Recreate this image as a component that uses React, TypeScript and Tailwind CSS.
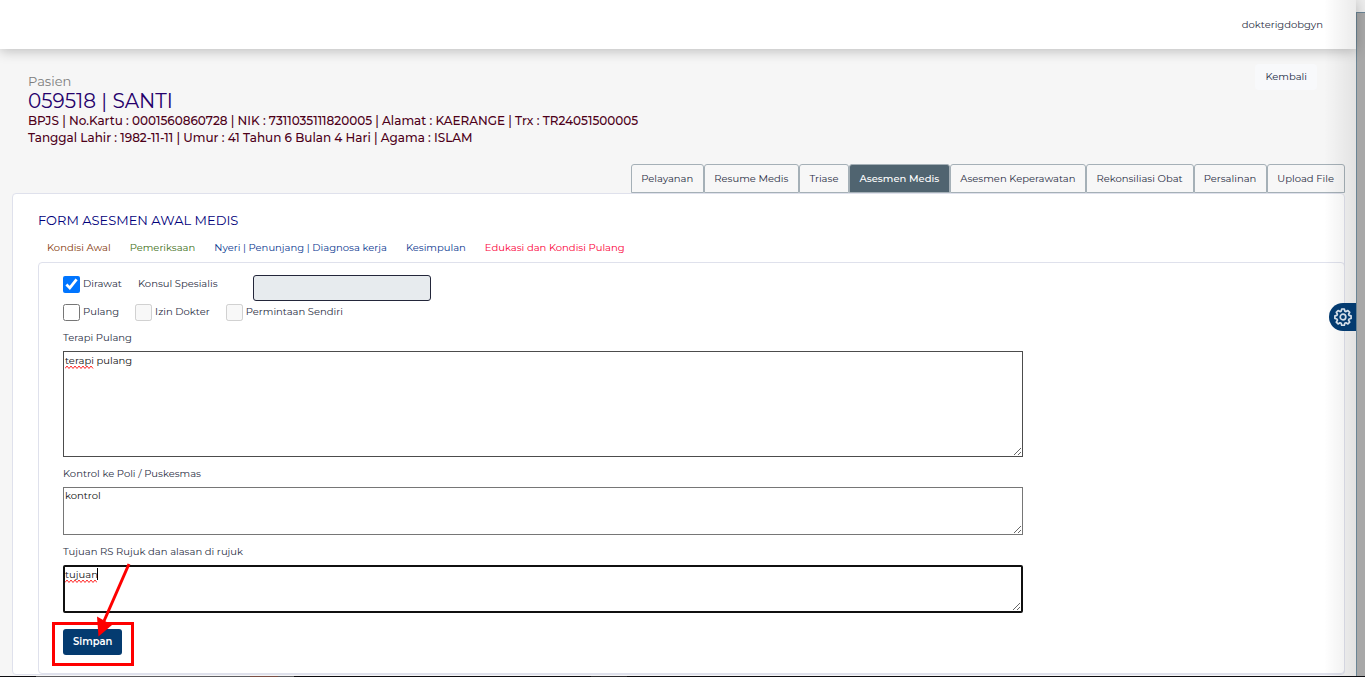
import React from "react";

const tabs = [
  "Pelayanan",
  "Resume Medis",
  "Triase",
  "Asesmen Medis",
  "Asesmen Keperawatan",
  "Rekonsiliasi Obat",
  "Persalinan",
  "Upload File",
];

const sections = [
  { label: "Kondisi Awal", color: "text-[#853a0c]" },
  { label: "Pemeriksaan", color: "text-[#3f7018]" },
  { label: "Nyeri | Penunjang | Diagnosa kerja", color: "text-[#0a3890]" },
  { label: "Kesimpulan", color: "text-[#0a3890]" },
  { label: "Edukasi dan Kondisi Pulang", color: "text-[#fb0038]" },
];

function Squiggle({ width }: { width: number }) {
  let d = "M0 3.5";
  for (let x = 2, up = true; x <= width; x += 2, up = !up) {
    d += ` L${x} ${up ? 1 : 3.5}`;
  }
  return (
    <svg
      className="pointer-events-none absolute top-[14px] left-[2px]"
      width={width}
      height={5}
      fill="none"
      stroke="#ff2a2a"
      aria-hidden="true"
    >
      <path d={d} />
    </svg>
  );
}

function Check({
  id,
  label,
  checked,
  disabled,
}: {
  id: string;
  label: string;
  checked?: boolean;
  disabled?: boolean;
}) {
  return (
    <span className="flex items-center gap-[3px]">
      <input
        id={id}
        type="checkbox"
        defaultChecked={checked}
        disabled={disabled}
        className="size-[17px] accent-[#0075ff]"
      />
      <label htmlFor={id} className="pb-[2px]">
        {label}
      </label>
    </span>
  );
}

function Area({
  id,
  label,
  value,
  mark,
  box,
  caret,
}: {
  id: string;
  label: string;
  value: string;
  mark?: number;
  box: string;
  caret?: boolean;
}) {
  return (
    <div>
      <label htmlFor={id} className="block leading-4">
        {label}
      </label>
      <div className="relative mt-[5px] w-[960px] max-w-full">
        <textarea
          id={id}
          defaultValue={value}
          spellCheck={false}
          className={`block w-full resize bg-white leading-4 text-[#111] outline-none ${box}`}
        />
        {mark && <Squiggle width={mark} />}
        {caret && <span className="absolute top-[3px] left-[34px] h-3 w-px bg-black" />}
      </div>
    </div>
  );
}

export default function App() {
  return (
    <div className="relative flex min-h-screen bg-[#f6f6f6] font-['Montserrat','Inter',sans-serif] text-[10px] text-[#2b2f45]">
      <div className="relative flex min-w-0 flex-1 flex-col">
        <header className="flex h-[49px] items-center justify-end bg-white pr-[33px] shadow-[0_2px_12px_rgba(0,0,0,0.24)]">
          <span>dokterigdobgyn</span>
        </header>

        <main className="flex flex-1 flex-col pr-[11px] pl-3">
          <div className="flex items-start justify-between pr-7 pl-4">
            <div className="pt-6">
              <p className="text-[13px] leading-[17px] text-[#7d7d7d]">Pasien</p>
              <h1 className="text-[20px] leading-[22px] text-[#25006b]">059518 | SANTI</h1>
              <div className="text-[12px] leading-[17px] font-medium text-[#4d0019]">
                <p>
                  BPJS | No.Kartu : 0001560860728 | NIK : 7311035111820005 | Alamat : KAERANGE | Trx
                  : TR24051500005
                </p>
                <p>
                  Tanggal Lahir : 1982-11-11 | Umur : 41 Tahun 6 Bulan 4 Hari | Agama : ISLAM
                </p>
              </div>
            </div>
            <button
              type="button"
              className="mt-[15px] h-[26px] rounded-sm bg-[#f8f9fb] px-[10px] pb-[2px] text-[#212b45]"
            >
              Kembali
            </button>
          </div>

          <nav className="mt-[18px] flex justify-end">
            {tabs.map((t) => (
              <a
                key={t}
                href="#"
                className={`flex h-[29px] items-center rounded-t-[3px] border pr-[10px] pl-[9px] ${
                  t === "Asesmen Medis"
                    ? "border-[#a5b0b7] bg-[#506470] font-medium text-white"
                    : "border-[#a5b0b7] bg-[#f7f7f7]"
                }`}
              >
                {t}
              </a>
            ))}
          </nav>

          <section className="flex flex-1 flex-col rounded-[4px] border border-[#dfe1ec] bg-white pl-[25px]">
            <h2 className="mt-[18px] text-[13px] leading-4 text-[#00007a]">FORM ASESMEN AWAL MEDIS</h2>
            <nav className="mt-3 flex gap-[19px] pl-[9px] leading-4">
              {sections.map((s) => (
                <a key={s.label} href="#" className={s.color}>
                  {s.label}
                </a>
              ))}
            </nav>

            <form
              className="mt-[6px] -mr-px flex-1 rounded-[4px] border border-[#dfe1ec] px-6 pt-3 pb-[18px]"
              onSubmit={(e) => e.preventDefault()}
            >
              <div className="flex items-start">
                <div className="flex h-[18px] w-[75px] items-center">
                  <Check id="dirawat" label="Dirawat" checked />
                </div>
                <label htmlFor="konsul" className="w-[115px] leading-[18px]">
                  Konsul Spesialis
                </label>
                <input
                  id="konsul"
                  type="text"
                  disabled
                  className="h-[26px] w-[178px] rounded-[3px] border border-[#23263a] bg-[#e7ebee] px-2"
                />
              </div>
              <div className="mt-[3px] flex gap-4">
                <Check id="pulang" label="Pulang" />
                <Check id="izin" label="Izin Dokter" disabled />
                <Check id="sendiri" label="Permintaan Sendiri" disabled />
              </div>

              <div className="mt-[9px] flex flex-col gap-[9px]">
                <Area
                  id="terapi"
                  label="Terapi Pulang"
                  value="terapi pulang"
                  mark={29}
                  box="h-[106px] border border-[#4c4c4c] px-px pt-px"
                />
                <Area
                  id="kontrol"
                  label="Kontrol ke Poli / Puskesmas"
                  value="kontrol"
                  box="h-[48px] border border-[#767676] px-px"
                />
                <Area
                  id="tujuan"
                  label="Tujuan RS Rujuk dan alasan di rujuk"
                  value="tujuan"
                  mark={32}
                  caret
                  box="h-[48px] rounded-[2px] border-2 border-[#101010]"
                />
              </div>

              <div className="relative mt-4 w-fit">
                <button
                  type="submit"
                  className="block h-[26px] rounded-[3px] bg-[#043b70] px-[10px] pb-[2px] font-semibold text-white"
                >
                  Simpan
                </button>
                <svg
                  className="pointer-events-none absolute top-[-66px] left-[-11px]"
                  width="84"
                  height="104"
                  viewBox="0 0 84 104"
                  aria-hidden="true"
                >
                  <rect x="1.5" y="60.5" width="79" height="41" fill="none" stroke="#fe0000" strokeWidth="3" />
                  <path d="M77 1 L52 58" stroke="#fe0000" strokeWidth="3" />
                  <path d="M45 53.500 L60 62 L46.500 73.500 Z" fill="#fe0000" />
                </svg>
              </div>
            </form>
          </section>
          <div className="h-[2px]" />
        </main>

        <div className="pointer-events-none absolute inset-y-0 right-0 w-8 bg-linear-to-r from-transparent to-black/8" />
        <button
          type="button"
          aria-label="Pengaturan"
          className="absolute top-[303px] right-0 flex h-7 w-[27px] items-center justify-center rounded-l-full bg-[#043b70] text-[#d5dfe9]"
        >
          <svg width="18" height="18" viewBox="0 0 18 18" fill="none" stroke="currentColor" aria-hidden="true">
            <path
              d="M7.700 1h2.600l.5 2.100 1.200.5 1.900-1.100 1.800 1.800-1.100 1.900.5 1.200 2 .5v2.600l-2 .5-.5 1.200 1.100 1.900-1.800 1.800-1.900-1.100-1.200.5-.5 2.100H7.700l-.5-2.100-1.200-.5-1.900 1.100-1.800-1.800 1.100-1.900-.5-1.200-2-.5V7.900l2-.5.5-1.200-1.100-1.900 1.800-1.800L6 3.600l1.200-.5z"
              strokeWidth="1.700"
              strokeLinejoin="round"
            />
            <circle cx="9" cy="9" r="2.800" strokeWidth="1.700" />
          </svg>
        </button>
      </div>

      <aside className="flex w-[9px] flex-col bg-[#ececec] pt-3">
        <div className="flex-1 border-t border-l border-[#6a8494] bg-[#a8a8a8]" />
      </aside>
      <div className="absolute inset-x-0 bottom-0 flex h-px bg-[#0c0c10]">
        <div className="ml-9 w-[214px] bg-[#5c5c60]" />
        <div className="w-7 bg-[#7a4f45]" />
        <div className="w-4 bg-[#5c5c60]" />
        <div className="ml-[297px] w-9 bg-[#2c2c30]" />
      </div>
    </div>
  );
}
